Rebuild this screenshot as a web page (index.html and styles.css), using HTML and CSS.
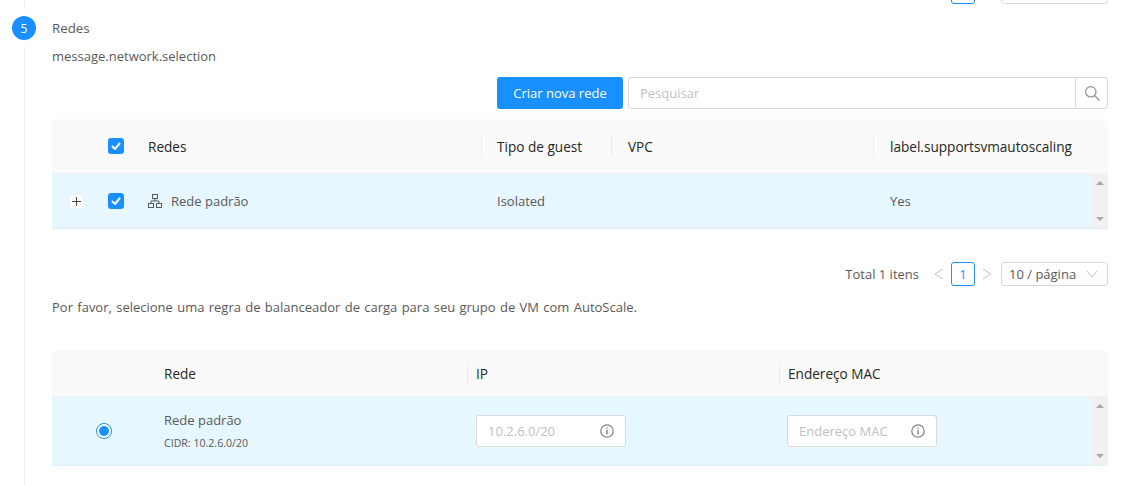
FILE: index.html
```html
<!DOCTYPE html>
<html lang="pt">
<head>
<meta charset="utf-8">
<title>Redes</title>
<link rel="stylesheet" href="styles.css">
</head>
<body>
<div class="step">
  <div class="rail">
    <div class="rail-top"></div>
    <div class="rail-dot">5</div>
    <div class="rail-bottom"></div>
  </div>
  <main class="content">
    <div class="clip-row">
      <div class="pager-stub">
        <span class="page-num"></span>
        <span class="size-stub"></span>
      </div>
    </div>
    <h2 class="title">Redes</h2>
    <p class="desc">message.network.selection</p>
    <div class="toolbar">
      <button class="btn-primary">Criar nova rede</button>
      <div class="search">
        <span class="search-input">Pesquisar</span>
        <span class="search-btn">
          <svg width="16" height="16" viewBox="0 0 16 16" fill="none" stroke="#8c8c8c" stroke-width="1.2"><circle cx="6.8" cy="6.8" r="5.2"/><path d="M10.6 10.6L15 15" stroke-linecap="round"/></svg>
        </span>
      </div>
    </div>

    <section class="table net-table">
      <div class="thead">
        <div class="cell"></div>
        <div class="cell check-cell"><span class="checkbox"><svg width="10" height="8" viewBox="0 0 10 8" fill="none" stroke="#fff" stroke-width="2"><path d="M1 4l3 3 5-6"/></svg></span></div>
        <div class="cell th">Redes</div>
        <div class="cell th sep">Tipo de guest</div>
        <div class="cell th sep">VPC</div>
        <div class="cell th sep">label.supportsvmautoscaling</div>
      </div>
      <div class="tbody">
        <div class="trow">
          <div class="cell expand-cell"><span class="expand"><svg width="9" height="9" viewBox="0 0 9 9" stroke="#444" stroke-width="1"><path d="M0 4.5h9M4.5 0v9"/></svg></span></div>
          <div class="cell check-cell"><span class="checkbox"><svg width="10" height="8" viewBox="0 0 10 8" fill="none" stroke="#fff" stroke-width="2"><path d="M1 4l3 3 5-6"/></svg></span></div>
          <div class="cell td name-cell">
            <svg class="net-icon" width="14" height="14" viewBox="0 0 14 14" fill="none" stroke="#595959" stroke-width="1"><rect x="4.5" y="0.5" width="5" height="4"/><rect x="0.5" y="9.5" width="5" height="4"/><rect x="8.5" y="9.5" width="5" height="4"/><path d="M7 4.5V7M3 9.5V7h8v2.5"/></svg>
            Rede padrão
          </div>
          <div class="cell td">Isolated</div>
          <div class="cell td"></div>
          <div class="cell td">Yes</div>
        </div>
        <div class="scrollbar"><span class="arrow-up"></span><span class="arrow-down"></span></div>
      </div>
    </section>

    <nav class="pager">
      <span class="total">Total 1 itens</span>
      <svg class="chev" width="10" height="12" viewBox="0 0 10 12" fill="none" stroke="#bfbfbf"><path d="M9 1L1 6l8 5"/></svg>
      <span class="page-current">1</span>
      <svg class="chev" width="10" height="12" viewBox="0 0 10 12" fill="none" stroke="#bfbfbf"><path d="M1 1l8 5-8 5"/></svg>
      <span class="size-select">10 / página
        <svg width="12" height="8" viewBox="0 0 12 8" fill="none" stroke="#bfbfbf"><path d="M1 1l5 6 5-6"/></svg>
      </span>
    </nav>

    <p class="lb-note">Por favor, selecione uma regra de balanceador de carga para seu grupo de VM com AutoScale.</p>

    <section class="table nic-table">
      <div class="thead">
        <div class="cell"></div>
        <div class="cell th">Rede</div>
        <div class="cell th sep">IP</div>
        <div class="cell th sep">Endereço MAC</div>
      </div>
      <div class="tbody">
        <div class="trow">
          <div class="cell radio-cell"><span class="radio"></span></div>
          <div class="cell td stack">
            <span>Rede padrão</span>
            <small>CIDR: 10.2.6.0/20</small>
          </div>
          <div class="cell td ip-cell">
            <span class="field">10.2.6.0/20
              <svg width="14" height="14" viewBox="0 0 14 14" fill="none" stroke="#808080" stroke-width="1.2"><circle cx="7" cy="7" r="6.2"/><path d="M7 6v4.4M7 3.4v1.4" stroke-width="1.4"/></svg>
            </span>
          </div>
          <div class="cell td">
            <span class="field">Endereço MAC
              <svg width="14" height="14" viewBox="0 0 14 14" fill="none" stroke="#808080" stroke-width="1.2"><circle cx="7" cy="7" r="6.2"/><path d="M7 6v4.4M7 3.4v1.4" stroke-width="1.4"/></svg>
            </span>
          </div>
        </div>
        <div class="scrollbar"><span class="arrow-up"></span><span class="arrow-down"></span></div>
      </div>
    </section>
  </main>
</div>
</body>
</html>
```
FILE: styles.css
```css
* { box-sizing: border-box; }
html, body { margin: 0; height: 485px; overflow: hidden; background: #fff; }
body { font-family: "Open Sans", "Noto Sans", sans-serif; font-size: 13px; color: #595959; }
.step { display: flex; height: 485px; }
.rail { width: 52px; flex: none; padding-left: 12px; display: flex; flex-direction: column; }
.rail-top { width: 1px; height: 9px; margin: 0 0 7px 12px; background: #f0f0f0; }
.rail-dot { width: 24px; height: 24px; border-radius: 50%; background: #1890ff; color: #fff; font-size: 12px; display: flex; align-items: center; justify-content: center; }
.rail-bottom { width: 1px; flex: 1; margin: 6px 0 0 12px; background: #f0f0f0; }
.content { width: 1056px; flex: none; }
.clip-row { height: 4px; overflow: hidden; display: flex; justify-content: flex-end; align-items: flex-end; }
.pager-stub { display: flex; gap: 26px; }
.page-num { width: 24px; height: 24px; border: 1px solid #1890ff; border-radius: 3px; }
.size-stub { width: 107px; height: 24px; border: 1px solid #d9d9d9; border-radius: 3px; }
.title { margin: 14px 0 0; font-size: 13.3px; line-height: 20px; font-weight: 500; color: #595959; }
.desc { margin: 8px 0 0; line-height: 20px; }
.toolbar { display: flex; justify-content: flex-end; gap: 5px; margin-top: 11px; height: 32px; }
.btn-primary { width: 126px; height: 32px; border: 0; border-radius: 3px; background: #1890ff; color: #fff; font: inherit; padding: 0; }
.search { width: 480px; height: 32px; display: flex; border: 1px solid #d9d9d9; border-radius: 3px; }
.search-input { flex: 1; padding-left: 11px; line-height: 30px; color: #bfbfbf; }
.search-btn { width: 32px; flex: none; border-left: 1px solid #d9d9d9; display: flex; align-items: center; justify-content: center; }
.table { position: relative; }
.net-table { margin-top: 10px; }
.thead { display: grid; background: #fafafa; border-bottom: 1px solid #f0f0f0; border-radius: 3px 3px 0 0; }
.tbody { display: flex; background: #e6f7ff; border-bottom: 1px solid #e0eef6; }
.trow { flex: 1; display: grid; }
.scrollbar { width: 16px; flex: none; background: #f1f1f1; display: flex; flex-direction: column; justify-content: space-between; align-items: center; padding: 7px 0; }
.arrow-up { width: 0; height: 0; border: 4px solid transparent; border-top: 0; border-bottom: 4px solid #a8a8a8; }
.arrow-down { width: 0; height: 0; border: 4px solid transparent; border-bottom: 0; border-top: 4px solid #a8a8a8; }
.net-table .thead { height: 55px; grid-template-columns: 46px 50px 333px 130px 262px 235px; }
.net-table .trow { height: 54px; grid-template-columns: 46px 50px 333px 130px 262px 219px; }
.nic-table { margin-top: 33px; }
.nic-table .thead { height: 47px; grid-template-columns: 104px 311px 312px 329px; }
.nic-table .trow { height: 68px; grid-template-columns: 104px 311px 312px 313px; }
.cell { display: flex; align-items: center; min-width: 0; }
.th { position: relative; padding-left: 17px; font-size: 13.6px; font-weight: 500; color: #262626; white-space: nowrap; }
.th:nth-child(3):not(.sep), .net-table .td.name-cell { padding-left: 0; }
.th:nth-child(4) { padding-left: 16px; }
.nic-table .th { padding-left: 9px; }
.nic-table .th:nth-child(2) { padding-left: 8px; }
.sep::before { content: ""; position: absolute; left: 0; top: 50%; height: 22px; margin-top: -11px; width: 1px; background: #ebebeb; }
.td { padding-left: 17px; white-space: nowrap; }
.net-table .td:nth-child(4) { padding-left: 16px; }
.nic-table .td { padding-left: 8px; }
.nic-table .ip-cell { padding-left: 9px; }
.check-cell { padding-left: 10px; }
.checkbox { width: 16px; height: 16px; border-radius: 3px; background: #1890ff; display: flex; align-items: center; justify-content: center; }
.expand-cell { padding-left: 17px; }
.expand { width: 15px; height: 15px; background: #fff; border: 1px solid #f0f0f0; border-radius: 3px; display: flex; align-items: center; justify-content: center; }
.name-cell { gap: 9px; }
.pager { display: flex; align-items: center; justify-content: flex-end; height: 24px; margin-top: 33px; }
.total { margin-right: 15px; }
.page-current { width: 24px; height: 24px; margin: 0 7px; border: 1px solid #1890ff; border-radius: 3px; color: #1890ff; display: flex; align-items: center; justify-content: center; }
.size-select { width: 107px; height: 24px; margin-left: 9px; padding: 0 9px 0 7px; border: 1px solid #d9d9d9; border-radius: 3px; display: flex; align-items: center; justify-content: space-between; }
.lb-note { margin: 11px 0 0; line-height: 20px; word-spacing: 0.95px; }
.radio-cell { padding-left: 44px; }
.radio { width: 16px; height: 16px; border-radius: 50%; border: 1px solid #1890ff; background: #fff; display: flex; align-items: center; justify-content: center; }
.radio::after { content: ""; width: 10px; height: 10px; border-radius: 50%; background: #1890ff; }
.stack { flex-direction: column; align-items: flex-start; justify-content: center; gap: 7px; padding-bottom: 1px; }
.stack small { font-size: 10.6px; line-height: 14px; }
.field { width: 150px; height: 32px; padding: 0 11px; background: #fff; border: 1px solid #d9d9d9; border-radius: 3px; color: #bfbfbf; display: flex; align-items: center; justify-content: space-between; }
```
